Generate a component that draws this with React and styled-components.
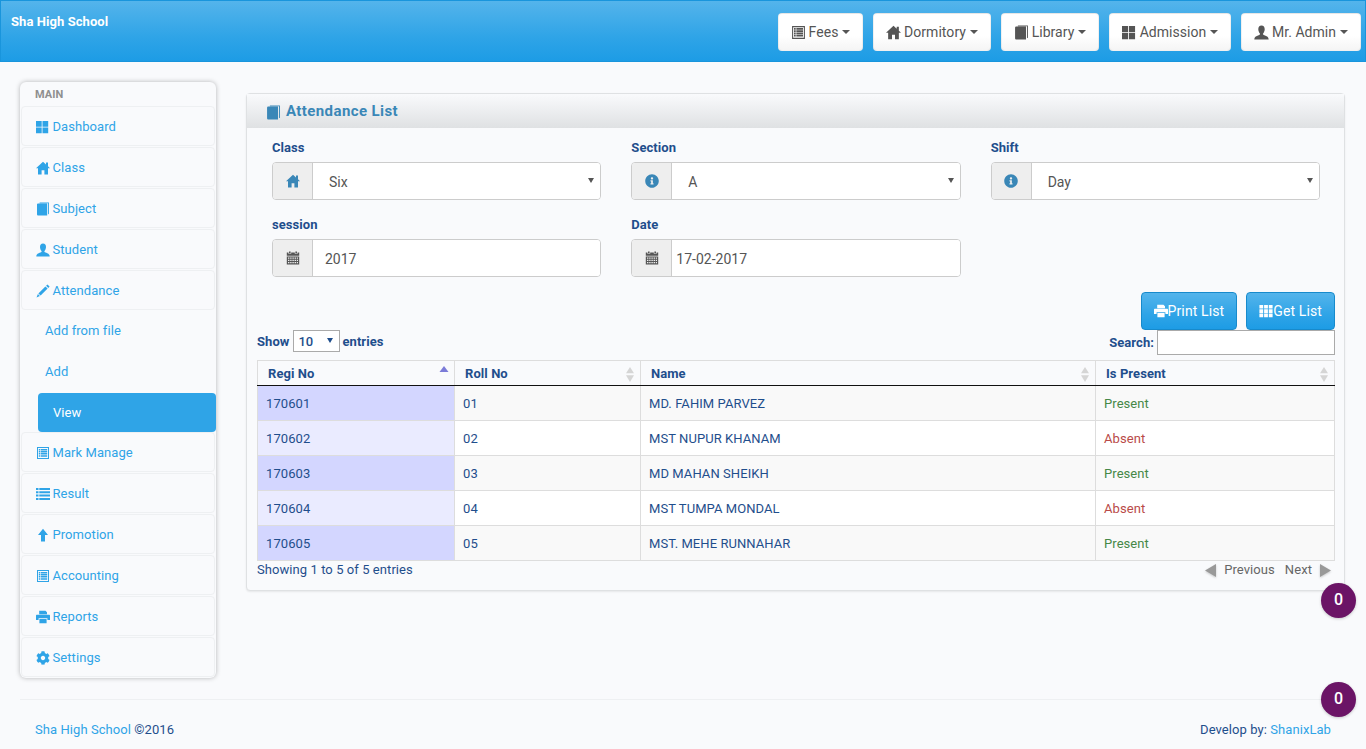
import React from "react";
import styled, { createGlobalStyle } from "styled-components";
import { FaCog, FaInfoCircle } from "react-icons/fa";

const Global = createGlobalStyle`
  html, body { margin: 0; padding: 0; background: #f9fafc; }
  body { font-family: Roboto, "Liberation Sans", sans-serif; font-size: 13px; color: #1f4e8c; line-height: 1.42857; letter-spacing: 0.07px; }
  * { box-sizing: border-box; }
`;

const PATHS = {
  listAlt: "M1 1h12v12H1z M2 2v10h10V2z M2.8 2.9h1.6v1.5H2.8z M5 2.9h6.2v1.5H5z M2.8 5h1.6v1.5H2.8z M5 5h6.2v1.5H5z M2.8 7.1h1.6v1.5H2.8z M5 7.1h6.2v1.5H5z M2.8 9.2h1.6v1.5H2.8z M5 9.2h6.2v1.5H5z",
  home: "M7 .8L10 3.5V1.6h2v3.7L14 7.3H12V13.4H8.4V9.2H5.6V13.4H2V7.3H0z",
  book: "M3.6 .4H13v11.4l-.9.6V1.2H3.6z M1 2.6C1 1.8 1.6 1.5 2.2 1.5H11.2V13.6H2.4C1.5 13.6 1 13 1 12.3z",
  thLarge: "M0 1h5.7v5.7H0z M6.5 1h5.7v5.7H6.5z M0 7.5h5.7v5.7H0z M6.5 7.5h5.7v5.7H6.5z",
  user: "M7 .5C5 .5 4 2 4 4c0 1.5.7 3 1.5 4 .3.5 0 1-.5 1.3C3.5 10 .3 10.5 .3 13.5h13.4c0-3-3.2-3.5-4.7-4.2-.5-.3-.8-.8-.5-1.3.8-1 1.5-2.5 1.5-4 0-2-1-3.5-3-3.5z",
  pencil: "M11.4 .4l2.2 2.2-1.3 1.3-2.2-2.2z M9.4 2.4l2.2 2.2-7 7-2.2-2.2z M1.9 10.1l2 2-3.4 1.4z",
  list: "M0 1h2.5v2H0z M3.3 1H14v2H3.3z M0 4.3h2.5v2H0z M3.3 4.3H14v2H3.3z M0 7.6h2.5v2H0z M3.3 7.6H14v2H3.3z M0 10.9h2.5v2H0z M3.3 10.9H14v2H3.3z",
  arrowUp: "M7 .8L12 7H9v6.4H5V7H2z",
  print: "M3.2 .8H9.5L11 2.3V4.2H3.2z M1 4.8h12c.6 0 1 .4 1 1V10h-2.6V8.2H2.6V10H0V5.8c0-.6.4-1 1-1z M3.4 9h7.2v4.2H3.4z",
  calendar: "M3 .6h1.6v1.6H3z M9.4 .6H11v1.6H9.4z M.8 1.6h1.6v1.2h2.8V1.6h3.6v1.2h2.8V1.6h1.6v3.2H.8z M.8 5.4h12.4v8H.8z M2 6.6v1.2h1.4V6.6z M4.2 6.6v1.2h1.4V6.6z M6.4 6.6v1.2h1.4V6.6z M8.6 6.6v1.2H10V6.6z M10.8 6.6v1.2h1.2V6.6z M2 8.8V10h1.4V8.8z M4.2 8.8V10h1.4V8.8z M6.4 8.8V10h1.4V8.8z M8.6 8.8V10H10V8.8z M10.8 8.8V10h1.2V8.8z M2 11v1.2h1.4V11z M4.2 11v1.2h1.4V11z M6.4 11v1.2h1.4V11z M8.6 11v1.2H10V11z M10.8 11v1.2h1.2V11z",
  th: "M.4 1h3.8v3.6H.4z M5.1 1h3.8v3.6H5.1z M9.8 1h3.8v3.6H9.8z M.4 5.3h3.8v3.6H.4z M5.1 5.3h3.8v3.6H5.1z M9.8 5.3h3.8v3.6H9.8z M.4 9.6h3.8v3.6H.4z M5.1 9.6h3.8v3.6H5.1z M9.8 9.6h3.8v3.6H9.8z",
};

const IconSvg = styled.svg`
  width: ${(p) => p.$size || 14}px;
  height: ${(p) => p.$size || 14}px;
  flex: none;
  fill: currentColor;
  display: block;
`;

const Glyph = ({ name, size }) => (
  <IconSvg viewBox="0 0 14 14" $size={size} aria-hidden="true">
    <path d={PATHS[name]} fillRule="evenodd" />
  </IconSvg>
);

const Page = styled.div`
  position: relative;
  min-height: 749px;
  overflow: hidden;
`;

const Header = styled.header`
  height: 62px;
  display: flex;
  justify-content: space-between;
  background: linear-gradient(#54b4eb, #2fa4e7 60%, #1d9ce5);
  border: 1px solid #1995dc;
  padding: 12px 4px 0 10px;
`;

const Brand = styled.div`
  color: #fff;
  font-weight: 700;
  font-size: 13px;
  line-height: 16px;
  padding-top: 1px;
`;

const HeaderNav = styled.nav`
  display: flex;
  gap: 10px;
`;

const NavButton = styled.button`
  height: 38px;
  width: ${(p) => p.$w}px;
  display: flex;
  align-items: center;
  justify-content: center;
  gap: 3px;
  padding: 0;
  border: 1px solid rgba(0, 0, 0, 0.06);
  border-radius: 4px;
  background: linear-gradient(#fff, #fff 60%, #f5f5f5);
  color: #555;
  font-family: inherit;
  font-size: 14px;
  letter-spacing: 0.05px;
`;

const Caret = styled.span`
  margin-left: 1px;
  border-top: 4px solid currentColor;
  border-left: 4px solid transparent;
  border-right: 4px solid transparent;
`;

const Main = styled.div`
  display: flex;
  align-items: flex-start;
  padding: 20px 21px 0 20px;
`;

const Sidebar = styled.aside`
  width: 196px;
  flex: none;
  height: 596px;
  padding: 0 1px;
  background: #f9fafc;
  border-radius: 6px;
  box-shadow: 0 0 5px rgba(0, 0, 0, 0.28);
`;

const SideLabel = styled.div`
  height: 24px;
  padding: 5px 0 0 14px;
  font-size: 11px;
  line-height: 16px;
  font-weight: 700;
  color: #8f8f8f;
`;

const SideItem = styled.a`
  height: 40px;
  margin-bottom: 1px;
  display: flex;
  align-items: center;
  gap: 2.5px;
  padding: 2px 0 0 14px;
  border: 1px solid #eef0f2;
  border-radius: 4px;
  color: #2fa4e7;
  font-size: 13px;
  svg { width: 14px; height: 14px; flex: none; }
`;

const SubList = styled.div`
  margin-top: -1px;
  height: 122px;
`;

const SubItem = styled.a`
  height: 41px;
  display: flex;
  align-items: center;
  padding: 2px 0 0 24px;
  color: #2fa4e7;
  font-size: 13px;
`;

const ActiveSubItem = styled.a`
  height: 39px;
  margin: 1px -1px 0 17px;
  display: flex;
  align-items: center;
  padding: 1px 0 0 15px;
  border-radius: 4px;
  background: #2fa4e7;
  color: #fff;
  font-size: 13px;
`;

const Panel = styled.section`
  flex: 1;
  min-width: 0;
  margin: 11px 0 0 30px;
  height: 498px;
  border: 1px solid #dfe1e3;
  border-radius: 4px;
  box-shadow: 0 1px 2px rgba(0, 0, 0, 0.08);
  background: #f9fafc;
`;

const PanelHead = styled.div`
  height: 34px;
  display: flex;
  align-items: center;
  gap: 5px;
  padding: 2px 0 0 19px;
  background: linear-gradient(#f9fafc, #dfe1e3);
  color: #3a87b7;
  font-size: 15px;
  font-weight: 700;
  letter-spacing: 0.4px;
`;

const PanelBody = styled.div`
  padding: 0 9px 0 10px;
`;

const FormRow = styled.div`
  display: grid;
  grid-template-columns: repeat(3, 1fr);
  height: 77px;
  padding-top: 11px;
`;

const Field = styled.div`
  padding: 0 15px;
`;

const Label = styled.label`
  display: block;
  height: 23px;
  font-weight: 700;
  font-size: 13px;
  line-height: 18px;
  color: #1f4e8c;
`;

const InputGroup = styled.div`
  display: flex;
  height: 38px;
  border: 1px solid #ccc;
  border-radius: 4px;
  overflow: hidden;
  background: #fff;
`;

const Addon = styled.span`
  width: 40px;
  flex: none;
  display: flex;
  align-items: center;
  justify-content: center;
  background: #eee;
  border-right: 1px solid #ccc;
  color: ${(p) => p.$color || "#555"};
  svg { width: 14px; height: 14px; }
`;

const SelectBox = styled.span`
  position: relative;
  flex: 1;
  min-width: 0;
  display: flex;
  &::after {
    content: "";
    position: absolute;
    right: 6px;
    top: 15px;
    border-top: 5px solid #555;
    border-left: 3px solid transparent;
    border-right: 3px solid transparent;
    pointer-events: none;
  }
`;

const Select = styled.select`
  appearance: none;
  width: 100%;
  border: 0;
  outline: 0;
  padding: 2px 12px 0 16px;
  background: #fff;
  color: #555;
  font-family: inherit;
  font-size: 14px;
`;

const TextInput = styled.input`
  flex: 1;
  min-width: 0;
  border: 0;
  outline: 0;
  padding: 2px ${(p) => p.$pad}px 0;
  background: #fff;
  color: #555;
  font-family: inherit;
  font-size: 14px;
`;

const Actions = styled.div`
  display: flex;
  justify-content: flex-end;
  gap: 9px;
  margin-top: 10px;
`;

const ActionButton = styled.button`
  height: 38px;
  display: flex;
  align-items: center;
  padding: 0 12px;
  border: 1px solid #178acc;
  border-radius: 4px;
  background: linear-gradient(#54b4eb, #2fa4e7 60%, #1d9ce5);
  color: #fff;
  font-family: inherit;
  font-size: 14px;
  letter-spacing: 0.12px;
`;

const TableTools = styled.div`
  display: flex;
  justify-content: space-between;
  height: 30px;
`;

const Length = styled.label`
  display: flex;
  align-items: flex-start;
  gap: 3px;
  height: 22px;
  line-height: 24px;
  font-weight: 700;
  font-size: 13px;
`;

const SmallSelectBox = styled.span`
  position: relative;
  display: flex;
  margin: 0 -1px 0 1px;
  &::after {
    content: "";
    position: absolute;
    right: 7px;
    top: 8px;
    border-top: 5px solid #1f4e8c;
    border-left: 3px solid transparent;
    border-right: 3px solid transparent;
    pointer-events: none;
  }
`;

const SmallSelect = styled.select`
  appearance: none;
  border-radius: 0;
  width: 47px;
  height: 22px;
  padding: 0 0 0 4px;
  border: 1px solid #aaa;
  background: #fff;
  color: #1f4e8c;
  font-family: inherit;
  font-size: 13px;
  font-weight: 500;
`;

const SearchBox = styled.label`
  display: flex;
  align-items: flex-start;
  gap: 3px;
  height: 25px;
  line-height: 25px;
  font-weight: 700;
  font-size: 13px;
`;

const SearchInput = styled.input`
  width: 178px;
  height: 25px;
  border: 1px solid #aaa;
  background: #fff;
`;

const Table = styled.table`
  width: 1077px;
  table-layout: fixed;
  border-collapse: collapse;
  border: 1px solid #ddd;
`;

const Th = styled.th`
  position: relative;
  height: 25px;
  padding: 2px 0 0 10px;
  text-align: left;
  font-size: 13px;
  font-weight: 700;
  color: #1f4e8c;
  border: 1px solid #ddd;
  border-bottom: 1px solid #111;
`;

const SortMark = styled.svg`
  position: absolute;
  right: 5px;
  top: 5px;
  width: 10px;
  height: 16px;
`;

const Tr = styled.tr`
  background: ${(p) => (p.$odd ? "#f9f9f9" : "#fff")};
`;

const Td = styled.td`
  height: 35px;
  padding: 2px 8px 0;
  font-size: 13px;
  border: 1px solid #ddd;
  background: ${(p) => p.$bg || "transparent"};
  color: ${(p) => p.$color || "#1f4e8c"};
`;

const TableFoot = styled.div`
  display: flex;
  justify-content: space-between;
  align-items: center;
  height: 19px;
  font-size: 13px;
`;

const Pager = styled.div`
  display: flex;
  align-items: center;
  gap: 10px;
  padding-right: 4px;
  color: #666;
  svg { width: 11px; height: 13px; fill: #999; display: block; filter: drop-shadow(0 1px 1px rgba(0,0,0,.2)); }
`;

const PagerLink = styled.span`
  display: flex;
  align-items: center;
  gap: 8px;
`;

const Footer = styled.footer`
  position: relative;
  margin: 21px 20px 0;
  height: 50px;
  border-top: 1px solid #eef0f2;
  display: flex;
  justify-content: space-between;
  align-items: center;
  padding: 11px 15px 0;
  color: #1f4e8c;
  font-size: 13px;
`;

const Link = styled.a`
  color: #2fa4e7;
`;

const Badge = styled.div`
  position: absolute;
  left: 1321px;
  top: ${(p) => p.$top}px;
  width: 35px;
  height: 35px;
  border-radius: 50%;
  display: flex;
  align-items: center;
  justify-content: center;
  background: #6b1466;
  color: #fff;
  font-size: 16px;
  font-weight: 500;
  box-shadow: 0 1px 3px rgba(0, 0, 0, 0.2);
`;

const navItems = [
  { icon: "listAlt", label: "Fees", w: 85 },
  { icon: "home", label: "Dormitory", w: 118 },
  { icon: "book", label: "Library", w: 98 },
  { icon: "thLarge", label: "Admission", w: 122 },
  { icon: "user", label: "Mr. Admin", w: 120 },
];

const sideTop = [
  ["thLarge", "Dashboard"],
  ["home", "Class"],
  ["book", "Subject"],
  ["user", "Student"],
  ["pencil", "Attendance"],
];
const sideBottom = [
  ["listAlt", "Mark Manage"],
  ["list", "Result"],
  ["arrowUp", "Promotion"],
  ["listAlt", "Accounting"],
  ["print", "Reports"],
];

const rows = [
  ["170601", "01", "MD. FAHIM PARVEZ", "Present"],
  ["170602", "02", "MST NUPUR KHANAM", "Absent"],
  ["170603", "03", "MD MAHAN SHEIKH", "Present"],
  ["170604", "04", "MST TUMPA MONDAL", "Absent"],
  ["170605", "05", "MST. MEHE RUNNAHAR", "Present"],
];

const Sort = ({ active }) => (
  <SortMark viewBox="0 0 10 16" aria-hidden="true">
    {active ? (
      <path d="M5 0l4.5 6H.5z" fill="#7b7bd8" />
    ) : (
      <>
        <path d="M5 1l4 6.3H1z" fill="#d5d5d5" />
        <path d="M5 16l-4-6.7h8z" fill="#d5d5d5" />
      </>
    )}
  </SortMark>
);

export default function App() {
  return (
    <Page>
      <Global />
      <Header>
        <Brand>Sha High School</Brand>
        <HeaderNav>
          {navItems.map((n) => (
            <NavButton key={n.label} $w={n.w}>
              <Glyph name={n.icon} size={15} />
              {n.label}
              <Caret />
            </NavButton>
          ))}
        </HeaderNav>
      </Header>
      <Main>
        <Sidebar>
          <SideLabel>MAIN</SideLabel>
          {sideTop.map(([i, l]) => (
            <SideItem key={l}>
              <Glyph name={i} />
              {l}
            </SideItem>
          ))}
          <SubList>
            <SubItem>Add from file</SubItem>
            <SubItem>Add</SubItem>
            <ActiveSubItem>View</ActiveSubItem>
          </SubList>
          {sideBottom.map(([i, l]) => (
            <SideItem key={l}>
              <Glyph name={i} />
              {l}
            </SideItem>
          ))}
          <SideItem>
            <FaCog />
            Settings
          </SideItem>
        </Sidebar>
        <Panel>
          <PanelHead>
            <Glyph name="book" size={15} />
            Attendance List
          </PanelHead>
          <PanelBody>
            <FormRow>
              <Field>
                <Label>Class</Label>
                <InputGroup>
                  <Addon $color="#3a87b7"><Glyph name="home" /></Addon>
                  <SelectBox><Select defaultValue="Six"><option>Six</option></Select></SelectBox>
                </InputGroup>
              </Field>
              <Field>
                <Label>Section</Label>
                <InputGroup>
                  <Addon $color="#3a87b7"><FaInfoCircle /></Addon>
                  <SelectBox><Select defaultValue="A"><option>A</option></Select></SelectBox>
                </InputGroup>
              </Field>
              <Field>
                <Label>Shift</Label>
                <InputGroup>
                  <Addon $color="#3a87b7"><FaInfoCircle /></Addon>
                  <SelectBox><Select defaultValue="Day"><option>Day</option></Select></SelectBox>
                </InputGroup>
              </Field>
            </FormRow>
            <FormRow>
              <Field>
                <Label>session</Label>
                <InputGroup>
                  <Addon><Glyph name="calendar" /></Addon>
                  <TextInput $pad={12} defaultValue="2017" />
                </InputGroup>
              </Field>
              <Field>
                <Label>Date</Label>
                <InputGroup>
                  <Addon><Glyph name="calendar" /></Addon>
                  <TextInput $pad={4} defaultValue="17-02-2017" />
                </InputGroup>
              </Field>
            </FormRow>
            <Actions>
              <ActionButton><Glyph name="print" />Print List</ActionButton>
              <ActionButton><Glyph name="th" />Get List</ActionButton>
            </Actions>
            <TableTools>
              <Length>
                Show
                <SmallSelectBox>
                  <SmallSelect defaultValue="10"><option>10</option></SmallSelect>
                </SmallSelectBox>
                entries
              </Length>
              <SearchBox>
                Search:
                <SearchInput />
              </SearchBox>
            </TableTools>
            <Table>
              <colgroup>
                <col width="197" />
                <col width="186" />
                <col width="455" />
                <col width="239" />
              </colgroup>
              <thead>
                <tr>
                  <Th>Regi No<Sort active /></Th>
                  <Th>Roll No<Sort /></Th>
                  <Th>Name<Sort /></Th>
                  <Th>Is Present<Sort /></Th>
                </tr>
              </thead>
              <tbody>
                {rows.map((r, i) => (
                  <Tr key={r[0]} $odd={i % 2 === 0}>
                    <Td $bg={i % 2 === 0 ? "#d3d6ff" : "#eaebff"}>{r[0]}</Td>
                    <Td>{r[1]}</Td>
                    <Td>{r[2]}</Td>
                    <Td $color={r[3] === "Present" ? "#468847" : "#b94a48"}>{r[3]}</Td>
                  </Tr>
                ))}
              </tbody>
            </Table>
            <TableFoot>
              <span>Showing 1 to 5 of 5 entries</span>
              <Pager>
                <PagerLink>
                  <svg viewBox="0 0 11 13" aria-hidden="true"><path d="M0 6.5L11 0v13z" /></svg>
                  Previous
                </PagerLink>
                <PagerLink>
                  Next
                  <svg viewBox="0 0 11 13" aria-hidden="true"><path d="M11 6.5L0 0v13z" /></svg>
                </PagerLink>
              </Pager>
            </TableFoot>
          </PanelBody>
        </Panel>
      </Main>
      <Footer>
        <span><Link>Sha High School</Link> ©2016</span>
        <span>Develop by: <Link>ShanixLab</Link></span>
      </Footer>
      <Badge $top={583}>0</Badge>
      <Badge $top={682}>0</Badge>
    </Page>
  );
}
